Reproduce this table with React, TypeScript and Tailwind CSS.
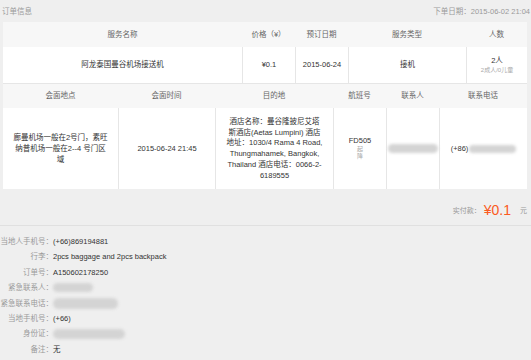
const orderCols = [
  { label: "服务名称", w: "w-[239px]" },
  { label: "价格（¥）", w: "w-[53px]" },
  { label: "预订日期", w: "w-[53px]" },
  { label: "服务类型", w: "w-[118px]" },
  { label: "人数", w: "w-[61px]" },
];

const detailCols = [
  { label: "会面地点", w: "w-[115px]" },
  { label: "会面时间", w: "w-[97px]" },
  { label: "目的地", w: "w-[118px]" },
  { label: "航班号", w: "w-[53px]" },
  { label: "联系人", w: "w-[53px]" },
  { label: "联系电话", w: "w-[88px]" },
];

const hotelLines = [
  "酒店名称：曼谷隆披尼艾塔",
  "斯酒店(Aetas Lumpini) 酒店",
  "地址：1030/4 Rama 4 Road,",
  "Thungmahamek, Bangkok,",
  "Thailand 酒店电话：0066-2-",
  "6189555",
];

function Blur({ className }: { className: string }) {
  return <span className={`inline-block rounded-full bg-[#d4d4d4] blur-[1.5px] ${className}`} />;
}

function InfoRow({ label, children }: { label: string; children: React.ReactNode }) {
  return (
    <div className="flex h-[15.4px] items-center">
      <span className="w-[53px] text-right text-[#9a9a9a] whitespace-nowrap">{label}：</span>
      <span className="flex items-center text-[#333]">{children}</span>
    </div>
  );
}

export default function App() {
  return (
    <div className="w-[531px] h-[360px] overflow-hidden bg-[#efefef] text-[7.5px] leading-none text-[#444] font-['Liberation_Sans','Noto_Sans_CJK_SC',sans-serif]">
      {/* title bar */}
      <div className="flex h-[22px] items-center justify-between pl-[2px] pr-[1px] pt-[2px] text-[#9a9a9a]">
        <span>订单信息</span>
        <span>下单日期：2015-06-02 21:04</span>
      </div>

      <div className="ml-[3px] w-[524px]">
        {/* order table */}
        <div className="flex h-[25px] bg-[#f7f7f7] text-[#666]">
          {orderCols.map((c) => (
            <div key={c.label} className={`${c.w} flex items-center justify-center`}>
              {c.label}
            </div>
          ))}
        </div>
        <div className="flex h-[36px] bg-white text-[#333]">
          <div className="w-[239px] flex items-center justify-center">阿龙泰国曼谷机场接送机</div>
          <div className="w-[53px] flex items-center justify-center border-l border-[#e6e6e6]">¥0.1</div>
          <div className="w-[53px] flex items-center justify-center border-l border-[#e6e6e6]">2015-06-24</div>
          <div className="w-[118px] flex items-center justify-center border-l border-[#e6e6e6]">接机</div>
          <div className="w-[61px] flex flex-col items-center justify-center gap-[3px] border-l border-[#e6e6e6]">
            <span>2人</span>
            <span className="text-[6px] text-[#aaa]">2成人/0儿童</span>
          </div>
        </div>

        {/* detail table */}
        <div className="flex h-[25px] border-t border-[#e6e6e6] bg-[#f7f7f7] text-[#666]">
          {detailCols.map((c) => (
            <div key={c.label} className={`${c.w} flex items-center justify-center`}>
              {c.label}
            </div>
          ))}
        </div>
        <div className="flex h-[81px] bg-white text-[#333]">
          <div className="w-[115px] flex flex-col items-center justify-center gap-[3.5px] text-center">
            <span>廊曼机场一般在2号门，素旺</span>
            <span>纳普机场一般在2--4 号门区</span>
            <span>域</span>
          </div>
          <div className="w-[97px] flex items-center justify-center border-l border-[#e6e6e6]">
            2015-06-24 21:45
          </div>
          <div className="w-[118px] flex flex-col items-center justify-center gap-[3.3px] border-l border-[#e6e6e6] text-center">
            {hotelLines.map((l) => (
              <span key={l} className="whitespace-nowrap">{l}</span>
            ))}
          </div>
          <div className="w-[53px] flex flex-col items-center justify-center border-l border-[#e6e6e6]">
            <span className="mb-[2px]">FD505</span>
            <span className="text-[6px] leading-[7px] text-[#aaa]">起</span>
            <span className="text-[6px] leading-[7px] text-[#aaa]">降</span>
          </div>
          <div className="w-[53px] flex items-center justify-center border-l border-[#e6e6e6]">
            <Blur className="h-[9px] w-[50px]" />
          </div>
          <div className="w-[88px] flex items-center justify-center gap-[1px] border-l border-[#e6e6e6]">
            <span>(+86)</span>
            <Blur className="h-[8px] w-[47px]" />
          </div>
        </div>
      </div>

      {/* paid amount */}
      <div className="flex h-[37px] items-center justify-end gap-[3px] border-b border-[#e0e0e0] pr-[4px] pt-[6px]">
        <span className="text-[7px] text-[#999]">实付款：</span>
        <span className="text-[14px] text-[#fb5a22]">¥0.1</span>
        <span className="ml-[6px] text-[7px] text-[#999]">元</span>
      </div>

      {/* extra info */}
      <div className="pt-[8px]">
        <InfoRow label="当地人手机号">(+66)869194881</InfoRow>
        <InfoRow label="行李">2pcs baggage and 2pcs backpack</InfoRow>
        <InfoRow label="订单号">A150602178250</InfoRow>
        <InfoRow label="紧急联系人">
          <Blur className="h-[9px] w-[40px]" />
        </InfoRow>
        <InfoRow label="紧急联系电话">
          <Blur className="h-[11px] w-[65px]" />
        </InfoRow>
        <InfoRow label="当地手机号">(+66)</InfoRow>
        <InfoRow label="身份证">
          <Blur className="h-[10px] w-[72px]" />
        </InfoRow>
        <InfoRow label="备注">无</InfoRow>
      </div>
    </div>
  );
}
